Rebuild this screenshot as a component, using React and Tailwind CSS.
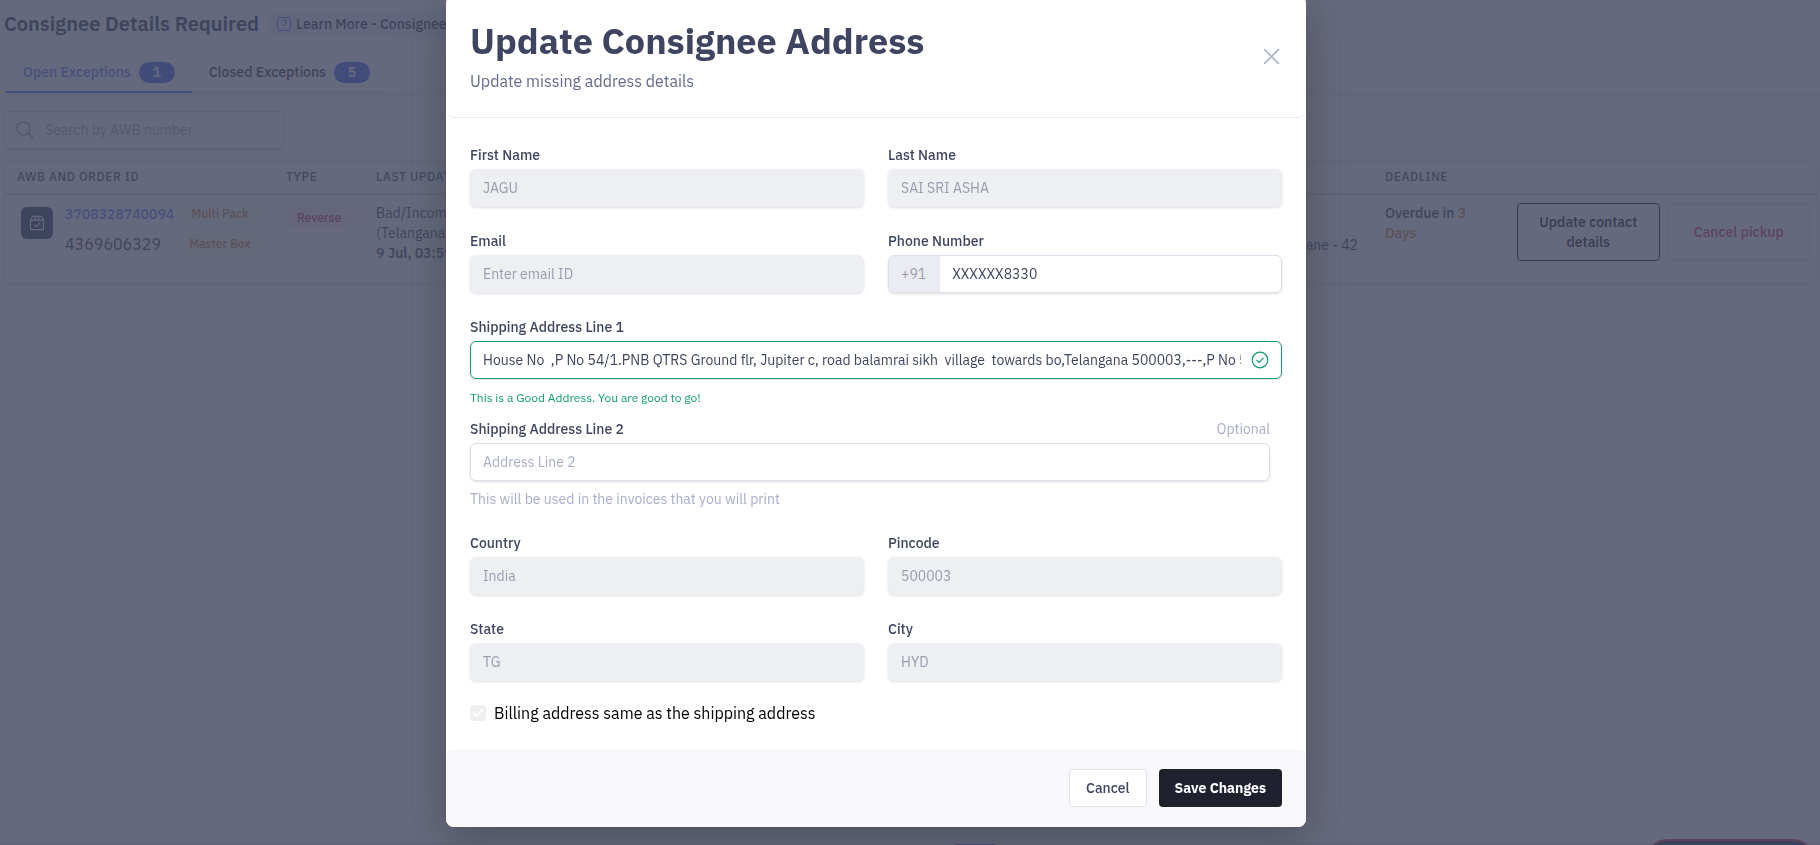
import React from 'react';

const SearchIcon = () => (
  <svg width="18" height="18" viewBox="0 0 18 18" fill="none" stroke="currentColor" strokeWidth="1.2" strokeLinecap="round">
    <circle cx="7.5" cy="7.5" r="6.5" />
    <path d="M12.2 12.2 17 17" />
  </svg>
);

const HelpIcon = () => (
  <svg width="14" height="14" viewBox="0 0 14 14" fill="none" stroke="currentColor" strokeWidth="1.1" strokeLinecap="round" strokeLinejoin="round">
    <rect x="0.6" y="0.6" width="12.8" height="12.8" rx="1.2" />
    <path d="M4.800 5C4.800 3.800 5.700 3 7 3s2.200.8 2.200 1.900C9.200 6.400 7 6.500 7 8.300" />
    <path d="M7 10.600v.1" />
  </svg>
);

const BoxIcon = () => (
  <svg width="16" height="16" viewBox="0 0 16 16" fill="none" stroke="currentColor" strokeWidth="1.2" strokeLinecap="round" strokeLinejoin="round">
    <path d="M1.500 5.500v8a1.200 1.200 0 0 0 1.200 1.200h10.600a1.200 1.200 0 0 0 1.200-1.200v-8L12.800 2a1 1 0 0 0-.9-.6H4.100a1 1 0 0 0-.9.6z" />
    <path d="M1.500 5.200h13M6.200 1.400v3.800M9.800 1.400v3.800" />
    <path d="m5.500 9.800 1.800 1.800 3.400-3.400" />
  </svg>
);

const CloseIcon = () => (
  <svg width="17" height="17" viewBox="0 0 17 17" fill="none" stroke="currentColor" strokeWidth="1.5" strokeLinecap="round">
    <path d="m1.500 1.500 14 14M15.500 1.500l-14 14" />
  </svg>
);

const CheckCircleIcon = () => (
  <svg width="18" height="18" viewBox="0 0 18 18" fill="none" stroke="currentColor" strokeWidth="1.2" strokeLinecap="round" strokeLinejoin="round">
    <circle cx="9" cy="9" r="7.800" />
    <path d="m5.800 9.200 2.200 2.200 4.200-4.200" />
  </svg>
);

const Field = ({ id, label, ...props }) => (
  <div>
    <label htmlFor={id} className="mb-1 block text-sm font-medium text-[#3f4560]">{label}</label>
    <input
      id={id}
      type="text"
      disabled
      className="block h-[38px] w-full rounded-md bg-[#eeeff3] px-[13px] text-sm text-[#9a9bac] shadow-sm placeholder:text-[#9a9bac]"
      {...props}
    />
  </div>
);

const Tab = ({ label, count, active }) => (
  <button
    className={`flex h-[31px] items-start gap-2 border-b-2 px-[17px] text-sm font-medium ${active ? 'border-[#4f70ef] text-[#6e7ff3]' : 'border-[#e3e3ee] text-[#3f4560]'}`}
  >
    <span className="leading-[21px]">{label}</span>
    <span className="h-[21px] w-9 rounded-full bg-[#4f70ef] text-center leading-[21px] font-semibold text-white">{count}</span>
  </button>
);

const Pill = ({ className, children }) => (
  <span className={`rounded-full text-center text-xs leading-[22px] font-medium ${className}`}>{children}</span>
);

const Exceptions = () => (
  <main className="flex h-screen flex-col overflow-hidden bg-white text-[#3f4560]">
    <div className="mt-[11px] flex h-[26px] items-center gap-2 pl-1">
      <h1 className="text-xl font-semibold">Consignee Details Required</h1>
      <a href="#" className="flex h-[26px] items-center gap-[5px] rounded-full bg-[#f3f3fe] px-[10px] text-sm font-medium">
        <span className="text-[#6e7ff3]"><HelpIcon /></span>
        Learn More - Consignee Details
      </a>
    </div>

    <nav className="mt-[19px] ml-1 flex h-[39px] items-end border-b border-[#e6e6f0] pb-px pl-[2px]">
      <Tab label="Open Exceptions" count="1" active />
      <Tab label="Closed Exceptions" count="5" />
    </nav>

    <div className="mt-4 ml-1 flex h-[38px] w-[280px] items-center gap-[11px] rounded-md border border-[#d9dae6] px-[11px] text-[#8f94b4] shadow-sm">
      <SearchIcon />
      <input aria-label="Search by AWB number" placeholder="Search by AWB number" className="min-w-0 flex-1 text-sm placeholder:text-[#a5a9c6]" />
    </div>

    <div className="mt-3 mr-[2px] ml-1 rounded-lg border border-[#e0e1ea]">
      <table className="w-full table-fixed border-collapse text-left text-sm">
        <colgroup>
          <col className="w-[268px]" />
          <col className="w-[90px]" />
          <col className="w-[240px]" />
          <col />
          <col className="w-[240px]" />
          <col className="w-[130px]" />
          <col className="w-[315px]" />
        </colgroup>
        <thead>
          <tr className="h-[32px] border-b-2 border-[#dcdde6] text-xs tracking-wider text-[#525873] uppercase">
            <th className="pb-[2px] pl-3 font-medium">AWB and Order ID</th>
            <th className="pb-[2px] pl-[13px] font-medium">Type</th>
            <th className="pb-[2px] pl-[13px] font-medium">Last Update</th>
            <th className="pb-[2px] pl-[13px] font-medium">Contact</th>
            <th className="pb-[2px] pl-[13px] font-medium">Address</th>
            <th className="pb-[2px] pl-[13px] font-medium">Deadline</th>
            <th></th>
          </tr>
        </thead>
        <tbody>
          <tr className="h-[89px] align-top">
            <td className="pt-2 pl-4">
              <div className="flex gap-3">
                <span className="mt-1 flex size-8 items-center justify-center rounded-md bg-[#3f4560] text-white"><BoxIcon /></span>
                <div>
                  <div className="flex h-[22px] items-center">
                    <a href="#" className="w-[113px] font-medium text-[#6e7ff3]">3708328740094</a>
                    <Pill className="w-[84px] bg-[#fbf8f4] text-[#c98a3c]">Multi Pack</Pill>
                  </div>
                  <div className="mt-2 flex h-[22px] items-center">
                    <span className="w-[113px] text-base">4369606329</span>
                    <Pill className="w-[84px] bg-[#fbf8f4] text-[#c98a3c]">Master Box</Pill>
                  </div>
                </div>
              </div>
            </td>
            <td className="pt-3 pl-[13px]"><Pill className="block w-[66px] bg-[#fcf0f5] text-[#c43d80]">Reverse</Pill></td>
            <td className="pt-2 pl-[13px]">
              <p>Bad/Incomplete Address</p>
              <p>(Telangana)</p>
              <p className="font-medium">9 Jul, 03:59 PM</p>
            </td>
            <td></td>
            <td className="pt-10 pr-[14px] text-right">Thane - 42</td>
            <td className="pt-2 pr-6 pl-[13px] font-medium">Overdue in <span className="text-[#c98a3c]">3 Days</span></td>
            <td className="pt-2 pr-[7px] pl-[15px]">
              <div className="grid grid-cols-2 gap-2">
                <button className="h-[58px] rounded border border-[#20222f] px-4 font-medium text-[#20222f]">Update contact details</button>
                <button className="h-[58px] rounded border border-[#e0e1ea] font-medium text-[#d0406a]">Cancel pickup</button>
              </div>
            </td>
          </tr>
        </tbody>
      </table>
    </div>

    <div className="mt-auto flex h-[2px] justify-center border-t border-[#dcdde6] pl-[130px]">
      <span className="w-10 bg-[#4f70ef]"></span>
    </div>
    <button aria-label="Help" className="fixed right-[5px] -bottom-[38px] h-11 w-[170px] rounded-full border-2 border-[#e0405a] bg-[#2c3a66]"></button>
  </main>
);

const App = () => {
  return (
    <div className="font-['IBM_Plex_Sans','Roboto',sans-serif]">
      <Exceptions />

      <div className="fixed inset-0 flex items-end justify-center overflow-hidden bg-[#3f445d]/80 pr-[68px] pb-[18px]">
        <form role="dialog" aria-labelledby="dialog-title" className="w-full max-w-[860px] shrink-0 rounded-lg bg-white shadow-[0_12px_40px_rgba(60,64,72,0.6)]">
          <header className="flex items-center justify-between rounded-lg border-b border-[#ececf0] px-6 py-6">
            <div>
              <h2 id="dialog-title" className="text-4xl leading-[44px] font-bold text-[#3f4560]">Update Consignee Address</h2>
              <p className="mt-[6px] text-base text-[#646b8d]">Update missing address details</p>
            </div>
            <button type="button" aria-label="Close" className="mr-[2px] text-[#a2a9c4]"><CloseIcon /></button>
          </header>

          <div className="px-6 pt-[27px] pb-6">
            <div className="grid grid-cols-2 gap-6">
              <Field id="first-name" label="First Name" defaultValue="JAGU" />
              <Field id="last-name" label="Last Name" defaultValue="SAI SRI ASHA" />
              <Field id="email" label="Email" placeholder="Enter email ID" />
              <div>
                <label htmlFor="phone" className="mb-1 block text-sm font-medium text-[#3f4560]">Phone Number</label>
                <div className="flex h-[38px] overflow-hidden rounded-md border border-[#dddeea] text-sm shadow-sm">
                  <span className="bg-[#ebecf1] pr-[14px] pl-3 leading-[36px] text-[#9a9bac]">+91</span>
                  <input id="phone" type="tel" defaultValue="XXXXXX8330" className="min-w-0 flex-1 px-3 text-[#3f4560]" />
                </div>
              </div>
            </div>

            <label htmlFor="address-1" className="mt-6 mb-1 block text-sm font-medium text-[#3f4560]">Shipping Address Line 1</label>
            <div className="flex h-[38px] items-center rounded-md border border-[#0f9d68] pr-3 pl-3 text-[#0f9d68] shadow-sm">
              <input
                id="address-1"
                defaultValue="House No  ,P No 54/1.PNB QTRS Ground flr, Jupiter c, road balamrai sikh  village  towards bo,Telangana 500003,---,P No 54/1"
                className="mr-[10px] min-w-0 flex-1 text-sm text-[#3f4560]"
              />
              <CheckCircleIcon />
            </div>
            <p className="mt-[10px] text-xs leading-[18px] text-[#0f9d68]">This is a Good Address. You are good to go!</p>

            <div className="mt-3 mr-3">
              <div className="mb-1 flex justify-between text-sm">
                <label htmlFor="address-2" className="font-medium text-[#3f4560]">Shipping Address Line 2</label>
                <span className="text-[#a9adca]">Optional</span>
              </div>
              <input id="address-2" placeholder="Address Line 2" className="block h-[38px] w-full rounded-md border border-[#dddeea] px-3 text-sm shadow-sm placeholder:text-[#a9adca]" />
              <p className="mt-2 text-sm text-[#a9adca]">This will be used in the invoices that you will print</p>
            </div>

            <div className="mt-6 grid grid-cols-2 gap-6">
              <Field id="country" label="Country" defaultValue="India" />
              <Field id="pincode" label="Pincode" defaultValue="500003" />
              <Field id="state" label="State" defaultValue="TG" />
              <Field id="city" label="City" defaultValue="HYD" />
            </div>

            <label className="mt-5 flex items-center gap-2 text-base text-black">
              <span className="grid size-4 place-items-center">
                <input type="checkbox" defaultChecked disabled className="col-start-1 row-start-1 size-4 appearance-none rounded bg-[#efefef]" />
                <svg className="pointer-events-none col-start-1 row-start-1" width="12" height="12" viewBox="0 0 12 12" fill="none" stroke="#fff" strokeWidth="2" strokeLinecap="round" strokeLinejoin="round">
                  <path d="m2 6.500 2.500 2.500L10 3" />
                </svg>
              </span>
              Billing address same as the shipping address
            </label>
          </div>

          <footer className="flex justify-end gap-3 rounded-lg bg-[#f9f9fb] px-6 py-5">
            <button type="button" className="h-[38px] rounded border border-[#e3e3ee] bg-white px-4 text-sm font-medium text-[#3f4560]">Cancel</button>
            <button type="submit" className="h-[38px] rounded bg-[#1f212e] px-4 text-sm font-bold text-white">Save Changes</button>
          </footer>
        </form>
      </div>
    </div>
  );
};

export default App;
